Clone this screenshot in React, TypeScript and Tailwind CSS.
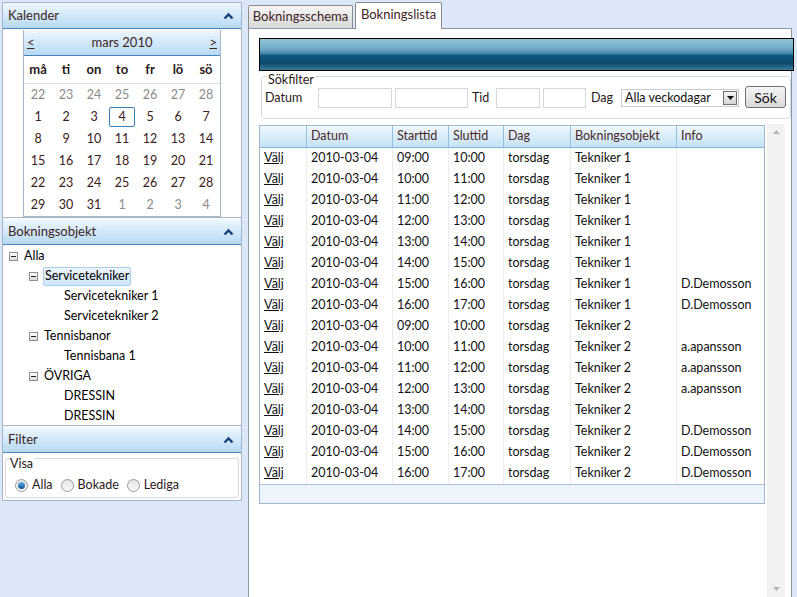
import React from "react";

const chevron = (
  <svg width="11" height="8" viewBox="0 0 11 8" className="block">
    <path d="M1.5 6.5 L5.5 2.5 L9.5 6.5" fill="none" stroke="#1b3c78" strokeWidth="2.4" />
  </svg>
);

function SectionHeader({ title }: { title: string }) {
  return (
    <div className="h-[26px] shrink-0 flex items-center justify-between pl-[5px] pr-[7px] bg-gradient-to-b from-[#eef7fd] to-[#b6daf3] border-b border-[#4a83bd] text-[13px] text-[#3f2424]">
      <span>{title}</span>
      {chevron}
    </div>
  );
}

const weekdays = ["må", "ti", "on", "to", "fr", "lö", "sö"];

const calendarWeeks: { d: number; other?: boolean }[][] = [
  [22, 23, 24, 25, 26, 27, 28].map((d) => ({ d, other: true })),
  [1, 2, 3, 4, 5, 6, 7].map((d) => ({ d })),
  [8, 9, 10, 11, 12, 13, 14].map((d) => ({ d })),
  [15, 16, 17, 18, 19, 20, 21].map((d) => ({ d })),
  [22, 23, 24, 25, 26, 27, 28].map((d) => ({ d })),
  [
    { d: 29 },
    { d: 30 },
    { d: 31 },
    { d: 1, other: true },
    { d: 2, other: true },
    { d: 3, other: true },
    { d: 4, other: true },
  ],
];

function Calendar() {
  return (
    <div className="w-[198px] mx-auto mt-[1px] border-x border-b border-[#a9b7c6] bg-white">
      <div className="h-[26px] flex items-center justify-between px-[3px] bg-gradient-to-b from-[#eef7fd] to-[#b6daf3] border-b border-[#4a83bd] text-[13px] text-[#3f2424]">
        <span className="underline">&lt;</span>
        <span>mars 2010</span>
        <span className="underline">&gt;</span>
      </div>
      <div className="grid grid-cols-7 h-[28px] items-center border-b border-[#dedede] text-[13px] font-bold text-[#2a1a1a]">
        {weekdays.map((w) => (
          <div key={w} className="text-center">
            {w}
          </div>
        ))}
      </div>
      {calendarWeeks.map((week, i) => (
        <div key={i} className="grid grid-cols-7 h-[22px] items-center text-[12.5px]">
          {week.map((c, j) => (
            <div key={j} className="flex justify-center">
              <span
                className={`w-[26px] h-[20px] flex items-center justify-center rounded-[2px] ${
                  c.other ? "text-[#8a8a8a]" : "text-[#3a2020]"
                } ${i === 1 && c.d === 4 ? "border border-[#3a7fb8]" : ""}`}
              >
                {c.d}
              </span>
            </div>
          ))}
        </div>
      ))}
    </div>
  );
}

function Minus() {
  return (
    <span className="w-[9px] h-[9px] border border-[#8e8f8f] bg-gradient-to-b from-white to-[#dcdcdc] flex items-center justify-center shrink-0">
      <span className="w-[5px] h-[1px] bg-[#222]" />
    </span>
  );
}

type TreeItem = { label: string; level: number; selected?: boolean };

const tree: TreeItem[] = [
  { label: "Alla", level: 0 },
  { label: "Servicetekniker", level: 1, selected: true },
  { label: "Servicetekniker 1", level: 2 },
  { label: "Servicetekniker 2", level: 2 },
  { label: "Tennisbanor", level: 1 },
  { label: "Tennisbana 1", level: 2 },
  { label: "ÖVRIGA", level: 1 },
  { label: "DRESSIN", level: 2 },
  { label: "DRESSIN", level: 2 },
];

function Tree() {
  return (
    <div className="pt-[1px] text-[12.5px] text-black">
      {tree.map((t, i) => (
        <div
          key={i}
          className={`h-[20px] flex items-center ${
            t.level === 0 ? "pl-[6px]" : t.level === 1 ? "pl-[26px]" : "pl-[60px]"
          }`}
        >
          {t.level < 2 && <Minus />}
          <span
            className={`${t.level < 2 ? "ml-[5px]" : ""} px-[1px] h-[19px] flex items-center ${
              t.selected ? "bg-gradient-to-b from-[#eef6fd] to-[#cfe6f8] border border-[#a9cdee] rounded-[2px]" : ""
            }`}
          >
            {t.label}
          </span>
        </div>
      ))}
    </div>
  );
}

function Radio({ checked, label }: { checked?: boolean; label: string }) {
  return (
    <span className="flex items-center gap-[4px]">
      <span className="w-[13px] h-[13px] rounded-full border border-[#9a9a9a] bg-gradient-to-b from-[#e4e4e4] to-[#fafafa] flex items-center justify-center">
        {checked && <span className="w-[7px] h-[7px] rounded-full bg-gradient-to-b from-[#5fb0ea] to-[#124f94]" />}
      </span>
      <span>{label}</span>
    </span>
  );
}

function LeftPanel() {
  return (
    <div className="ml-[2px] mt-[2px] w-[240px] h-[499px] border border-[#a5b4c6] bg-white flex flex-col self-start">
      <SectionHeader title="Kalender" />
      <div className="h-[189px] shrink-0 border-b border-[#a5b4c6]">
        <Calendar />
      </div>
      <div className="h-[1px] shrink-0" />
      <SectionHeader title="Bokningsobjekt" />
      <div className="h-[181px] shrink-0 border-b border-[#a5b4c6]">
        <Tree />
      </div>
      <div className="h-[1px] shrink-0" />
      <SectionHeader title="Filter" />
      <div className="px-[2px] pt-[5px]">
        <div className="relative h-[40px] border border-[#d3d9df] rounded-[3px] text-[12.5px] text-[#2a1a1a]">
          <span className="absolute left-[4px] top-[-1px] bg-white leading-[12px] pr-[1px]">Visa</span>
          <div className="flex items-center gap-[8px] pl-[9px] pt-[17px]">
            <Radio checked label="Alla" />
            <Radio label="Bokade" />
            <Radio label="Lediga" />
          </div>
        </div>
      </div>
    </div>
  );
}

type Row = { start: string; end: string; obj: string; info: string };

const rows: Row[] = [
  { start: "09:00", end: "10:00", obj: "Tekniker 1", info: "" },
  { start: "10:00", end: "11:00", obj: "Tekniker 1", info: "" },
  { start: "11:00", end: "12:00", obj: "Tekniker 1", info: "" },
  { start: "12:00", end: "13:00", obj: "Tekniker 1", info: "" },
  { start: "13:00", end: "14:00", obj: "Tekniker 1", info: "" },
  { start: "14:00", end: "15:00", obj: "Tekniker 1", info: "" },
  { start: "15:00", end: "16:00", obj: "Tekniker 1", info: "D.Demosson" },
  { start: "16:00", end: "17:00", obj: "Tekniker 1", info: "D.Demosson" },
  { start: "09:00", end: "10:00", obj: "Tekniker 2", info: "" },
  { start: "10:00", end: "11:00", obj: "Tekniker 2", info: "a.apansson" },
  { start: "11:00", end: "12:00", obj: "Tekniker 2", info: "a.apansson" },
  { start: "12:00", end: "13:00", obj: "Tekniker 2", info: "a.apansson" },
  { start: "13:00", end: "14:00", obj: "Tekniker 2", info: "" },
  { start: "14:00", end: "15:00", obj: "Tekniker 2", info: "D.Demosson" },
  { start: "15:00", end: "16:00", obj: "Tekniker 2", info: "D.Demosson" },
  { start: "16:00", end: "17:00", obj: "Tekniker 2", info: "D.Demosson" },
];

const cols = ["w-[47px]", "w-[86px]", "w-[56px]", "w-[55px]", "w-[67px]", "w-[106px]", "w-[87px]"];
const headers = ["", "Datum", "Starttid", "Sluttid", "Dag", "Bokningsobjekt", "Info"];

function Grid() {
  return (
    <div className="ml-[10px] w-[506px] self-start border border-[#9fb6cd] text-[12.5px]">
      <div className="flex h-[22px] bg-gradient-to-b from-[#eef7fd] to-[#c5e2f6] border-b border-[#86b4da] text-[#4a2727]">
        {headers.map((h, i) => (
          <div
            key={i}
            className={`${cols[i]} shrink-0 flex items-center pl-[4px] ${
              i < headers.length - 1 ? "border-r border-[#94bfe2]" : ""
            }`}
          >
            {h}
          </div>
        ))}
      </div>
      {rows.map((r, i) => {
        const cells = ["Välj", "2010-03-04", r.start, r.end, "torsdag", r.obj, r.info];
        return (
          <div key={i} className="flex h-[21px] text-[#111]">
            {cells.map((c, j) => (
              <div
                key={j}
                className={`${cols[j]} shrink-0 flex items-center pl-[4px] ${
                  j < cells.length - 1 ? "border-r border-[#ececec]" : ""
                } ${j === 0 ? "underline" : ""}`}
              >
                {c}
              </div>
            ))}
          </div>
        );
      })}
      <div className="h-[19px] bg-[#eef4fb] border-t border-[#a9c0d6]" />
    </div>
  );
}

function Input({ w }: { w: string }) {
  return <div className={`${w} h-[20px] border border-[#d2d8de] bg-white`} />;
}

function RightPanel() {
  return (
    <div className="ml-[6px] mt-[2px] w-[544px] flex flex-col">
      <div className="h-[26px] flex items-end text-[13px] text-[#3f2424]">
        <div className="w-[105px] h-[23px] border border-b-0 border-[#8b8b8b] rounded-t-[2px] bg-gradient-to-b from-[#f6f6f6] to-[#d8d8d8] flex items-center justify-center">
          Bokningsschema
        </div>
        <div className="ml-[2px] w-[87px] h-[27px] -mb-px relative z-10 border border-b-0 border-[#8b8b8b] rounded-t-[2px] bg-white flex items-center justify-center pb-[2px]">
          Bokningslista
        </div>
      </div>
      <div className="flex-1 border border-b-0 border-[#8b97a5] bg-white flex flex-col">
        <div className="mt-[9px] ml-[10px] mr-[-3px] h-[33px] border border-black bg-[linear-gradient(to_bottom,#92c4d8_0%,#6ba6c2_35%,#3f86aa_48%,#10577d_52%,#0b4a6d_78%,#3c7c9b_100%)]" />
        <div className="relative mt-[5px] ml-[12px] h-[43px] border border-[#d3dbe2] rounded-[3px] text-[12.5px] text-[#2a1a1a]">
          <span className="absolute left-[5px] top-[-3px] bg-white leading-[12px] px-[1px]">Sökfilter</span>
          <div className="flex items-center pl-[3px] pt-[11px]">
            <span className="w-[53px]">Datum</span>
            <Input w="w-[74px]" />
            <div className="ml-[3px]">
              <Input w="w-[73px]" />
            </div>
            <span className="ml-[4px] w-[24px]">Tid</span>
            <Input w="w-[44px]" />
            <div className="ml-[3px]">
              <Input w="w-[43px]" />
            </div>
            <span className="ml-[5px] w-[30px]">Dag</span>
            <div className="w-[118px] h-[18px] border border-[#c5ccd3] flex items-center justify-between pl-[3px] pr-[1px] text-[#111]">
              <span>Alla veckodagar</span>
              <span className="w-[14px] h-[14px] border border-[#6f6f6f] bg-gradient-to-b from-[#f4f4f4] to-[#d5d5d5] flex items-center justify-center">
                <svg width="7" height="4" viewBox="0 0 7 4">
                  <path d="M0 0 L7 0 L3.5 4 Z" fill="#111" />
                </svg>
              </span>
            </div>
            <div className="ml-[6px] w-[41px] h-[22px] -mt-[2px] border border-[#707070] rounded-[3px] bg-gradient-to-b from-[#f5f5f5] to-[#dadada] flex items-center justify-center text-[14px] text-[#111]">
              Sök
            </div>
          </div>
        </div>
        <div className="mt-[5px] flex flex-1">
          <div className="pt-[1px] flex">
            <Grid />
          </div>
          <div className="ml-[2px] w-[18px] bg-[#f2f2f2] flex flex-col justify-between items-center py-[6px]">
            <svg width="7" height="4" viewBox="0 0 7 4">
              <path d="M0 4 L7 4 L3.5 0 Z" fill="#b5b5b5" />
            </svg>
            <svg width="7" height="4" viewBox="0 0 7 4">
              <path d="M0 0 L7 0 L3.5 4 Z" fill="#b5b5b5" />
            </svg>
          </div>
        </div>
      </div>
    </div>
  );
}

export default function App() {
  return (
    <div className="w-[797px] h-[597px] overflow-hidden bg-[#dce8f8] flex font-['Lato','Noto_Sans',sans-serif] text-[12px]">
      <LeftPanel />
      <RightPanel />
    </div>
  );
}
